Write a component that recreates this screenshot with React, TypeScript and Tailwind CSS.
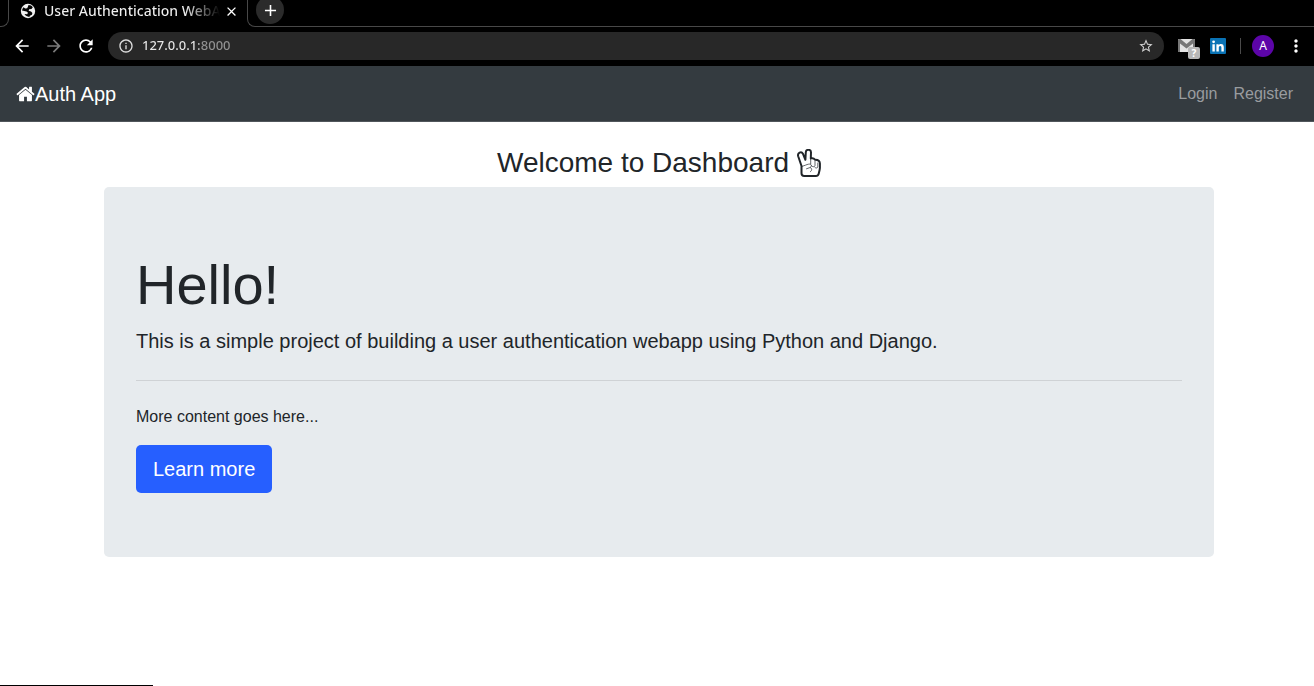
import React from "react";
import {
  MdAdd,
  MdArrowBack,
  MdArrowForward,
  MdClose,
  MdInfoOutline,
  MdMoreVert,
  MdRefresh,
  MdStarBorder,
} from "react-icons/md";

function HomeIcon() {
  return (
    <svg viewBox="0 0 1664 1792" className="h-5 w-[19px]" fill="currentColor" aria-hidden="true">
      <path d="M1408 992v480q0 26-19 45t-45 19H960v-384H704v384H320q-26 0-45-19t-19-45V992q0-1 .5-3t.5-3l575-474 575 474q1 2 1 6zm223-69l-62 74q-8 9-21 11h-3q-13 0-21-7L832 424l-692 577q-12 8-24 7-13-2-21-11l-62-74q-8-10-7-23.5T37 878l719-599q32-26 76-26t76 26l244 204V288q0-14 9-23t23-9h192q14 0 23 9t9 23v408l219 182q10 8 11 21.5t-7 23.5z" />
    </svg>
  );
}

function GlobeIcon() {
  return (
    <svg viewBox="0 0 16 16" className="size-4 shrink-0" aria-hidden="true">
      <circle cx="8" cy="8" r="7.2" fill="#f2f2f2" />
      <path d="M8.500 2c1.800 0 3.300.8 4.300 2.200L11.500 6l-2.300.2-.6 1.600 2.400.7 1.400 1.400-.5 1.900-2 .9-.6 1.200c-2 0-3.800-1-4.800-2.800l2.700.1.800-1.500L6.500 8.500 2 7.600C2.200 6.200 2.700 5.100 3.500 4.200L5.200 5.600 7.200 5.200 8 3.500z" fill="#050505" />
    </svg>
  );
}

function PeaceIcon() {
  return (
    <svg viewBox="0 0 24 28" className="h-7 w-6" fill="none" stroke="currentColor" strokeLinecap="round" strokeLinejoin="round" aria-hidden="true">
      <path
        strokeWidth="2"
        d="M4.500 17 1.200 7.200C.2 3.800 4.300 1.800 5.900 4.700L8.400 10.800 8.800 3.200C9 0 13.800 0 14 3.200L13.800 9.400C15.600 8.900 17.200 9.500 18 10.800 20.600 10.700 22.800 12.100 22.900 14.600V18.600C22.900 19.500 22.800 20.200 22.600 21L21.700 24.700C21.300 26.200 20.400 27 18.900 27H7.200C5.500 27 4.500 25.900 4.500 24.300Z"
      />
      <path strokeWidth="0.7" d="M4.500 17.600 8.400 16.200C10.800 15.200 12.300 14.800 13.500 15.300 15 16 14.600 18 13.100 18.500L9.500 19.800M13.700 10V15M18 12V16.500C17.600 18 15.400 18.200 14.800 17M20.800 14V18C20.400 19.300 18.600 19.400 17.700 18.200M13.500 18.700C15.400 19.700 15 21.500 13.300 22.800" />
    </svg>
  );
}

function MailIcon() {
  return (
    <svg viewBox="0 0 17 13" className="h-[13px] w-[17px]" aria-hidden="true">
      <rect width="17" height="13" rx="1" fill="#e3e3e3" />
      <path d="M0 1a1 1 0 0 1 1-1h1.500l6 5 6-5H16a1 1 0 0 1 1 1v12h-2V4.500L8.500 9.500 2 4.500V13H0z" fill="#777" />
    </svg>
  );
}

function LinkedInIcon() {
  return (
    <svg viewBox="0 0 16 16" className="size-4" aria-hidden="true">
      <rect width="16" height="16" rx="1" fill="#0a73b5" />
      <circle cx="3.6" cy="3.8" r="1.4" fill="#fff" />
      <path d="M2.4 6.2h2.4v7.3H2.4zM6.4 6.2h2.3v1c.4-.7 1.2-1.2 2.3-1.2 2 0 2.8 1.2 2.8 3.3v4.2h-2.4V9.8c0-1-.2-1.8-1.2-1.8s-1.4.7-1.4 1.8v3.7H6.4z" fill="#fff" />
    </svg>
  );
}

function TabStrip() {
  return (
    <div className="flex h-[27px] items-start">
      <div className="h-[27px] w-[9px] rounded-br-lg border-r border-b border-[#484848]" />
      <div className="flex h-[22px] w-[238px] items-center pl-[11px]">
        <GlobeIcon />
        <span className="ml-2 w-[176px] bg-linear-to-r from-[#f0f0f0] from-80% to-transparent to-100% bg-clip-text text-sm font-medium whitespace-nowrap text-transparent">
          User Authentication WebA
        </span>
        <button type="button" aria-label="Close tab" className="ml-1 text-white">
          <MdClose className="size-[15px]" />
        </button>
      </div>
      <div className="flex h-[27px] flex-1 items-start rounded-bl-lg border-b border-l border-[#484848] pl-2">
        <button type="button" aria-label="New tab" className="-mt-1 flex size-7 items-center justify-center rounded-full bg-[#2b2b2b] text-white">
          <MdAdd className="size-[19px]" />
        </button>
      </div>
    </div>
  );
}

function Toolbar() {
  return (
    <div className="flex h-[39px] items-center pr-2 pb-0.5 pl-1.5">
      <button type="button" aria-label="Back" className="flex w-8 justify-center text-white">
        <MdArrowBack className="size-5" />
      </button>
      <button type="button" aria-label="Forward" className="flex w-8 justify-center text-[#7a7a7a]">
        <MdArrowForward className="size-5" />
      </button>
      <button type="button" aria-label="Reload" className="flex w-8 justify-center text-white">
        <MdRefresh className="size-5" />
      </button>
      <div className="ml-1.5 flex h-7 flex-1 items-center rounded-full bg-[#282828] pr-2.5 pl-2.5">
        <MdInfoOutline className="size-4 shrink-0 text-[#dedede]" />
        <input
          type="text"
          aria-label="Address"
          defaultValue="127.0.0.1:8000"
          className="ml-2 min-w-0 flex-1 bg-linear-to-r from-[#e8e8e8] from-[57px] to-[#929292] to-[57px] bg-clip-text text-[13px] font-medium text-transparent outline-none"
        />
        <button type="button" aria-label="Bookmark this page" className="text-[#d0d0d0]">
          <MdStarBorder className="size-4" />
        </button>
      </div>
      <button type="button" aria-label="Mail" className="relative ml-3.5 flex w-[22px]">
        <MailIcon />
        <span className="absolute top-2 left-2.5 flex size-3 items-center justify-center rounded-xs bg-[#b8b8b8] text-[10px] font-bold text-white">
          ?
        </span>
      </button>
      <button type="button" aria-label="LinkedIn" className="ml-2.5">
        <LinkedInIcon />
      </button>
      <span className="ml-3.5 h-4 w-px bg-[#4a4a4a]" />
      <button type="button" aria-label="Profile" className="ml-[11px] flex size-[22px] items-center justify-center rounded-full bg-[#5c05a8] text-xs text-white">
        A
      </button>
      <button type="button" aria-label="Menu" className="ml-3 text-white">
        <MdMoreVert className="size-5" />
      </button>
    </div>
  );
}

export default function App() {
  return (
    <div className="min-h-screen bg-white font-['Liberation_Sans',Arial,sans-serif] text-[#212529]">
      <header className="bg-black font-['Noto_Sans',sans-serif]">
        <TabStrip />
        <Toolbar />
      </header>

      <nav className="flex h-14 items-center justify-between border-b border-[#50565b] bg-[#343b40] pr-[21px] pl-4">
        <a href="#" className="flex items-center text-xl text-white">
          <HomeIcon />
          Auth App
        </a>
        <div className="flex gap-4 text-base text-[#999c9f]">
          <a href="#login">Login</a>
          <a href="#register">Register</a>
        </div>
      </nav>

      <main className="pt-6 pl-1">
        <div className="mx-auto max-w-[1110px]">
          <h3 className="mb-2 flex items-center justify-center gap-2 text-[28px] leading-[33px]">
            Welcome to Dashboard
            <PeaceIcon />
          </h3>
          <section className="rounded-[5px] bg-[#e7ebee] px-8 py-16">
            <h1 className="mb-2 text-[56px] leading-[67px]">Hello!</h1>
            <p className="text-xl leading-[30px]">
              This is a simple project of building a user authentication webapp using Python and Django.
            </p>
            <hr className="my-6 border-[#cfd2d5]" />
            <p className="mb-4 text-base">More content goes here...</p>
            <a href="#more" className="flex h-12 w-fit items-center rounded-[5px] bg-[#265fff] px-[17px] text-xl text-white">
              Learn more
            </a>
          </section>
        </div>
      </main>

      <div className="fixed bottom-0 left-0 h-px w-[153px] bg-black" />
    </div>
  );
}
